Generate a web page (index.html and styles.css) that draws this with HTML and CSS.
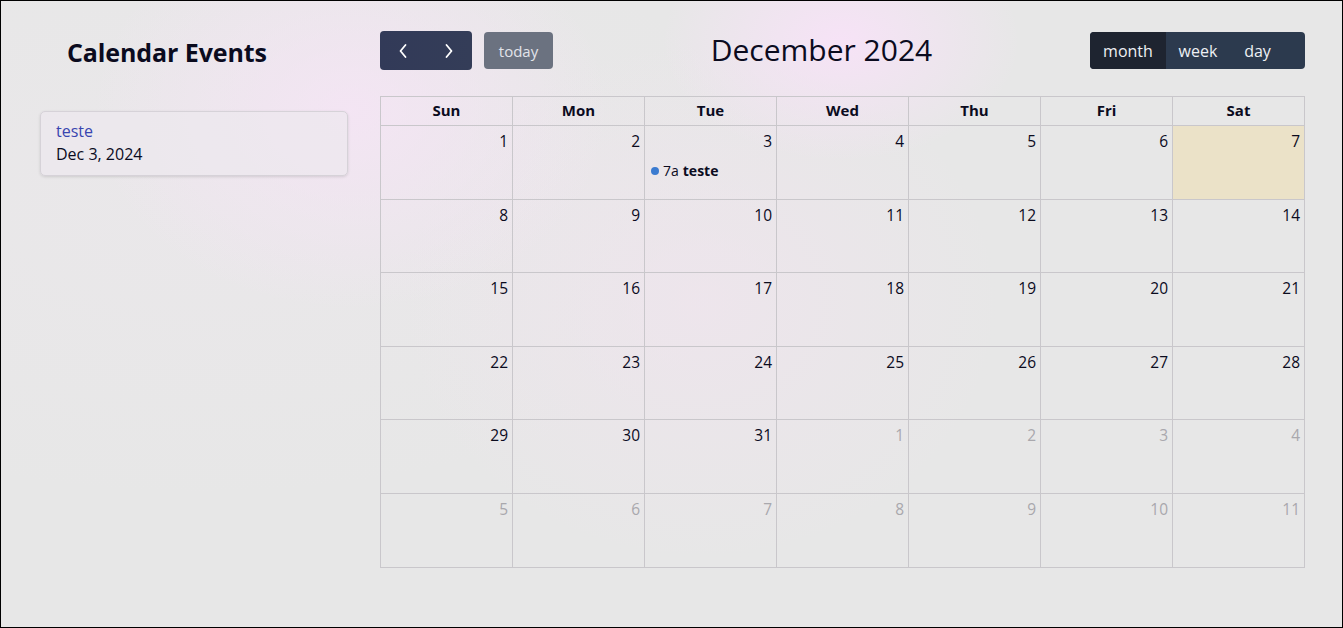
FILE: index.html
```html
<!DOCTYPE html>
<html lang="en">
<head>
<meta charset="utf-8">
<title>Calendar Events</title>
<link rel="stylesheet" href="styles.css">
</head>
<body>
<div class="app">
  <aside class="sidebar">
    <h2 class="sidebar-title">Calendar Events</h2>
    <ul class="event-list">
      <li class="event-card">
        <div class="event-title">teste</div>
        <div class="event-date">Dec 3, 2024</div>
      </li>
    </ul>
  </aside>
  <main class="calendar">
    <div class="toolbar">
      <div class="toolbar-left">
        <div class="btn-group nav-group">
          <button class="btn nav-btn" aria-label="prev">
            <svg width="10" height="16" viewBox="0 0 10 16"><path d="M7.5 2 L2.5 8 L7.5 14" fill="none" stroke="#fff" stroke-width="1.8" stroke-linecap="round" stroke-linejoin="round"/></svg>
          </button>
          <button class="btn nav-btn" aria-label="next">
            <svg width="10" height="16" viewBox="0 0 10 16"><path d="M2.5 2 L7.5 8 L2.5 14" fill="none" stroke="#fff" stroke-width="1.8" stroke-linecap="round" stroke-linejoin="round"/></svg>
          </button>
        </div>
        <button class="btn today-btn">today</button>
      </div>
      <h1 class="month-title">December 2024</h1>
      <div class="btn-group view-group">
        <button class="btn view-btn active">month</button>
        <button class="btn view-btn week">week</button>
        <button class="btn view-btn day">day</button>
      </div>
    </div>
    <table class="month-grid">
      <thead>
        <tr><th>Sun</th><th>Mon</th><th>Tue</th><th>Wed</th><th>Thu</th><th>Fri</th><th>Sat</th></tr>
      </thead>
      <tbody>
        <tr>
          <td><span class="num">1</span></td>
          <td><span class="num">2</span></td>
          <td><span class="num">3</span><div class="event"><span class="dot"></span><span class="ev-time">7a</span><span class="ev-name">teste</span></div></td>
          <td><span class="num">4</span></td>
          <td><span class="num">5</span></td>
          <td><span class="num">6</span></td>
          <td class="today"><span class="num">7</span></td>
        </tr>
        <tr>
          <td><span class="num">8</span></td><td><span class="num">9</span></td><td><span class="num">10</span></td><td><span class="num">11</span></td><td><span class="num">12</span></td><td><span class="num">13</span></td><td><span class="num">14</span></td>
        </tr>
        <tr>
          <td><span class="num">15</span></td><td><span class="num">16</span></td><td><span class="num">17</span></td><td><span class="num">18</span></td><td><span class="num">19</span></td><td><span class="num">20</span></td><td><span class="num">21</span></td>
        </tr>
        <tr>
          <td><span class="num">22</span></td><td><span class="num">23</span></td><td><span class="num">24</span></td><td><span class="num">25</span></td><td><span class="num">26</span></td><td><span class="num">27</span></td><td><span class="num">28</span></td>
        </tr>
        <tr>
          <td><span class="num">29</span></td><td><span class="num">30</span></td><td><span class="num">31</span></td><td class="other"><span class="num">1</span></td><td class="other"><span class="num">2</span></td><td class="other"><span class="num">3</span></td><td class="other"><span class="num">4</span></td>
        </tr>
        <tr>
          <td class="other"><span class="num">5</span></td><td class="other"><span class="num">6</span></td><td class="other"><span class="num">7</span></td><td class="other"><span class="num">8</span></td><td class="other"><span class="num">9</span></td><td class="other"><span class="num">10</span></td><td class="other"><span class="num">11</span></td>
        </tr>
      </tbody>
    </table>
  </main>
</div>
</body>
</html>
```
FILE: styles.css
```css
* { box-sizing: border-box; }
html, body { margin: 0; padding: 0; }
body {
  font-family: "Open Sans", "Noto Sans", sans-serif;
  color: #0b0b1e;
}
.app {
  width: 1343px;
  height: 628px;
  border: 1px solid #000;
  display: flex;
  background-color: #e7e7e7;
  background-image:
    radial-gradient(ellipse 180px 120px at 840px 40px, rgba(248, 226, 248, 0.9), rgba(248, 226, 248, 0) 100%),
    radial-gradient(ellipse 260px 200px at 350px 110px, rgba(246, 228, 246, 0.8), rgba(246, 228, 246, 0) 100%),
    radial-gradient(ellipse 300px 260px at 700px 300px, rgba(240, 228, 238, 0.7), rgba(240, 228, 238, 0) 100%),
    radial-gradient(ellipse 600px 300px at 200px 200px, rgba(236, 232, 236, 0.6), rgba(236, 232, 236, 0) 100%);
  overflow: hidden;
}
.sidebar {
  width: 379px;
  flex: none;
  padding: 35px 32px 0 39px;
}
.sidebar-title {
  margin: 0 0 42px 27px;
  font-size: 25px;
  font-weight: 700;
  line-height: 33px;
  letter-spacing: -0.1px;
}
.event-list { list-style: none; margin: 0; padding: 0; }
.event-card {
  width: 308px;
  height: 65px;
  padding: 8px 15px;
  border: 1px solid #d6d2d8;
  border-radius: 5px;
  background: rgba(236, 232, 238, 0.7);
  box-shadow: 0 1px 3px rgba(0, 0, 0, 0.12);
}
.event-title {
  color: #3845b0;
  font-size: 16px;
  line-height: 22px;
}
.event-date {
  font-size: 16px;
  line-height: 24px;
  color: #0b0b1e;
  font-weight: 500;
}
.calendar {
  flex: none;
  width: 925px;
  padding-top: 30px;
}
.toolbar {
  display: flex;
  align-items: center;
  justify-content: space-between;
  height: 39px;
  margin-bottom: 26px;
}
.toolbar-left { display: flex; align-items: center; gap: 12px; }
.btn {
  border: 0;
  margin: 0;
  font-family: inherit;
  font-size: 16px;
  color: #eef0f4;
  cursor: pointer;
}
.btn-group { display: flex; border-radius: 4px; overflow: hidden; }
.nav-group {
  height: 39px;
  background: linear-gradient(90deg, #323a58, #343d58);
}
.nav-btn {
  width: 46px;
  height: 39px;
  background: transparent;
  display: flex;
  align-items: center;
  justify-content: center;
  padding: 0;
}
.today-btn {
  width: 69px;
  height: 37px;
  border-radius: 4px;
  background: #6b7280;
  color: #e2e4ea;
  padding: 0;
  font-size: 15px;
}
.month-title {
  margin: 0 0 2px 0;
  font-size: 30px;
  font-weight: 400;
  line-height: 36px;
  color: #0b0b1e;
}
.view-group {
  height: 37px;
  background: #2c3a4e;
  padding-right: 20px;
}
.view-btn {
  height: 37px;
  background: transparent;
  padding: 0;
  font-size: 16px;
}
.view-btn.active { width: 76px; background: #1e2430; }
.view-btn.week { width: 64px; }
.view-btn.day { width: 55px; }
.month-grid {
  width: 925px;
  border-collapse: collapse;
  table-layout: fixed;
}
.month-grid th, .month-grid td {
  border: 1px solid #c9c7cb;
  padding: 0;
}
.month-grid th {
  height: 29px;
  font-size: 15px;
  font-weight: 700;
  line-height: 18px;
  text-align: center;
  vertical-align: middle;
  padding-bottom: 2px;
}
.month-grid td {
  height: 73.6px;
  vertical-align: top;
  text-align: right;
}
.month-grid td.today { background: rgba(236, 224, 190, 0.75); }
.num {
  display: block;
  padding: 4px 4px 0 0;
  font-size: 15.5px;
  font-weight: 500;
  line-height: 22px;
}
.other .num { color: #a9a8ad; font-weight: 400; }
.event {
  display: flex;
  align-items: center;
  text-align: left;
  margin: 10px 0 0 6px;
  font-size: 14px;
  line-height: 18px;
}
.dot {
  width: 8px;
  height: 8px;
  border-radius: 50%;
  background: #3b7bd0;
  margin-right: 4px;
}
.ev-time { margin-right: 4px; font-weight: 500; }
.ev-name { font-weight: 700; }
```
